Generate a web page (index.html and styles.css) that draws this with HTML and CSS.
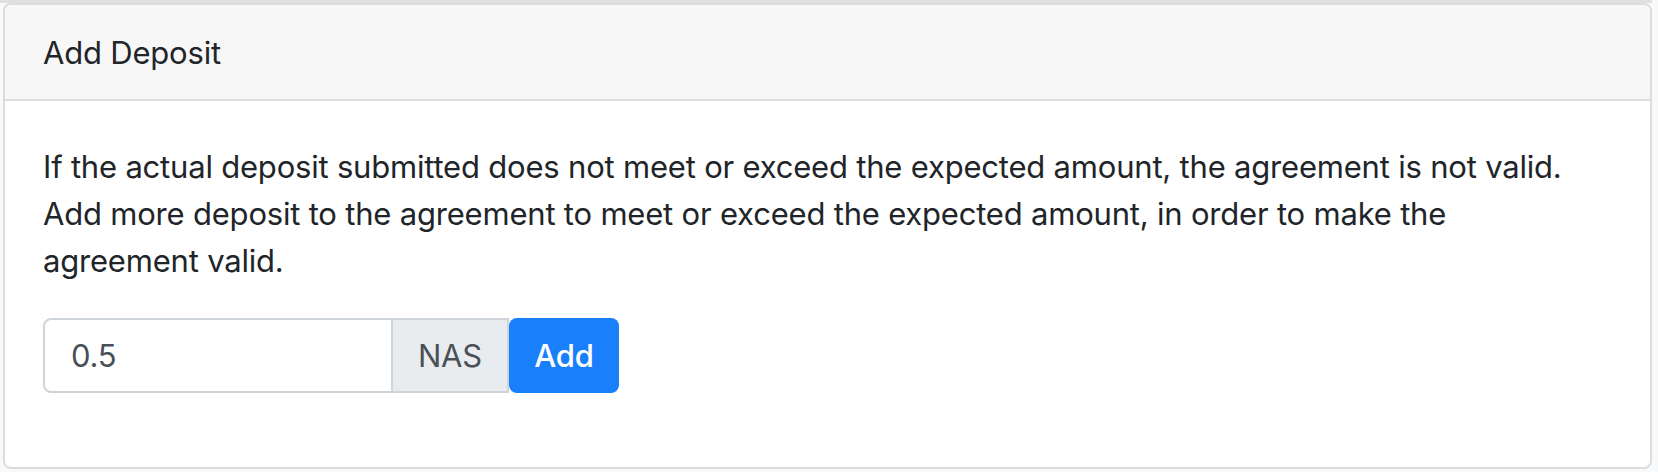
FILE: index.html
```html
<!DOCTYPE html>
<html lang="en">
<head>
<meta charset="utf-8">
<title>Add Deposit</title>
<link rel="stylesheet" href="styles.css">
</head>
<body>
<div class="page">
  <div class="top-strip"></div>
  <div class="card">
    <div class="card-header">Add Deposit</div>
    <div class="card-body">
      <p class="note">If the actual deposit submitted does not meet or exceed the expected amount, the agreement is not valid. Add more deposit to the agreement to meet or exceed the expected amount, in order to make the agreement valid.</p>
      <div class="input-group">
        <input class="amount" type="text" value="0.5">
        <span class="addon">NAS</span>
        <button class="btn" type="button">Add</button>
      </div>
    </div>
  </div>
</div>
</body>
</html>
```

FILE: styles.css
```css
html, body {
  margin: 0;
  padding: 0;
}
body {
  background: #f8f9fa;
  font-family: Inter, "Liberation Sans", Arial, sans-serif;
  color: #212529;
  font-size: 31px;
  line-height: 47px;
  letter-spacing: -0.2px;
}
.page {
  width: 1652px;
}
.top-strip {
  height: 3px;
  background: #e0e0e0;
}
.card {
  margin-left: 3px;
  width: 1649px;
  box-sizing: border-box;
  background: #ffffff;
  border: 2px solid #dcdcdc;
  border-radius: 8px;
  overflow: hidden;
}
.card-header {
  background: #f7f7f7;
  border-bottom: 2px solid #dcdcdc;
  padding: 24px 38px 23px;
}
.card-body {
  padding: 42px 50px 74px 38px;
}
.note {
  margin: 0 0 34px;
}
.input-group {
  display: flex;
  align-items: stretch;
  height: 75px;
}
.amount {
  width: 350px;
  box-sizing: border-box;
  margin: 0;
  border: 2px solid #ced4da;
  border-radius: 8px 0 0 8px;
  padding: 0 26px;
  font-family: inherit;
  font-size: 31px;
  letter-spacing: inherit;
  color: #495057;
  background: #fff;
  outline: none;
}
.addon {
  display: flex;
  align-items: center;
  justify-content: center;
  width: 116px;
  box-sizing: border-box;
  border: 2px solid #ced4da;
  border-left: none;
  background: #e9ecef;
  color: #495057;
  font-size: 31px;
}
.btn {
  width: 110px;
  box-sizing: border-box;
  margin: 0;
  border: none;
  border-radius: 8px;
  background: #1a7ffb;
  color: #ffffff;
  font-family: inherit;
  font-size: 31px;
  letter-spacing: inherit;
  font-weight: 500;
  padding: 0;
  cursor: pointer;
}
```
